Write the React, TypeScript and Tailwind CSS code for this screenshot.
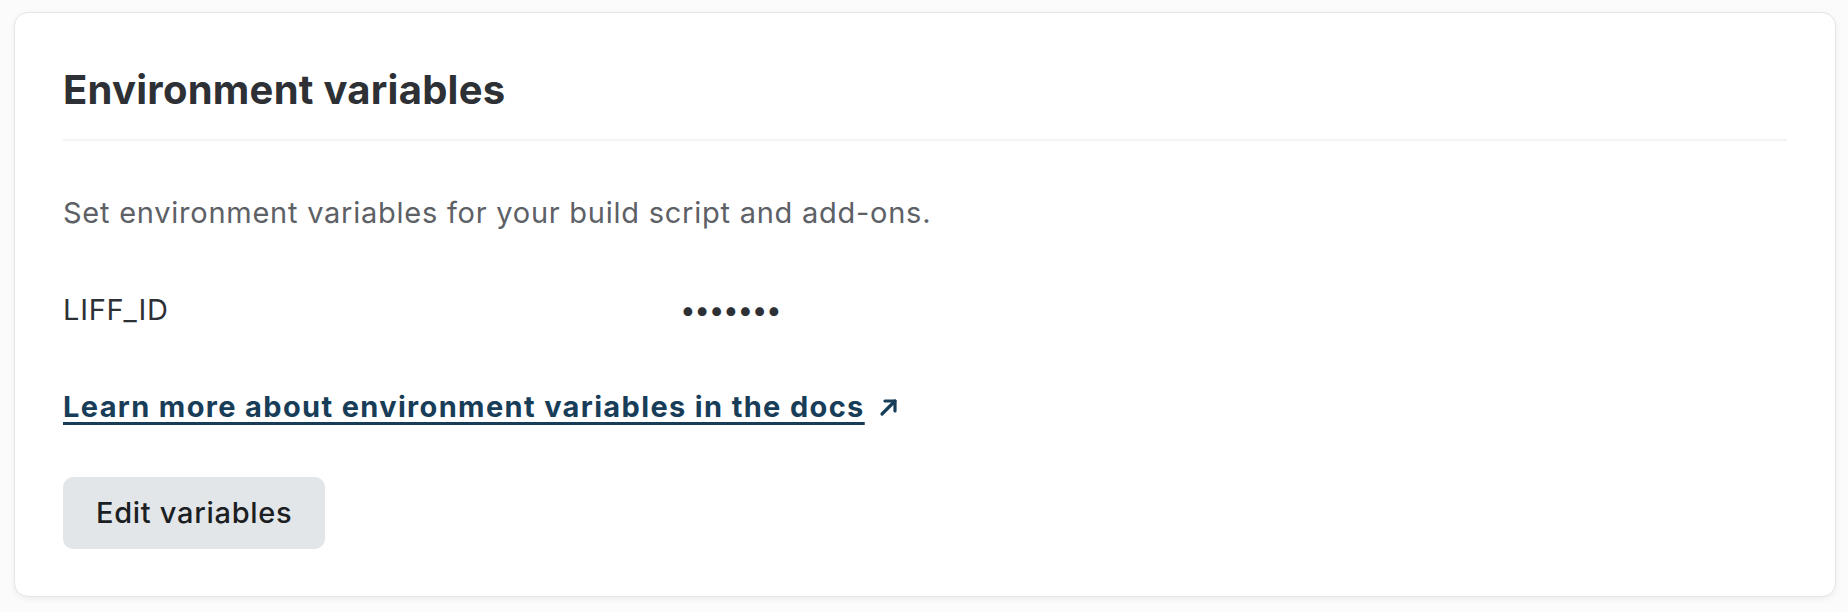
import React from "react";

export default function App() {
  return (
    <div
      className="min-h-[612px] w-full bg-[#fbfbfb] pl-[14px] pr-[12px] pt-[12px] pb-[15px]"
      style={{ fontFamily: "Inter, 'Noto Sans', 'Liberation Sans', sans-serif" }}
    >
      <div className="rounded-[14px] border border-[#e3e5e8] bg-white px-[48px] pt-[53px] pb-[47px] shadow-[0_2px_6px_rgba(0,0,0,0.06)]">
        <div className="border-b-2 border-[#f3f4f5] pb-[25px]">
          <h2 className="text-[40px] leading-[48px] font-bold tracking-[0.25px] text-[#2d3034]">
            Environment variables
          </h2>
        </div>
        <p className="mt-[52px] text-[29px] leading-[40px] tracking-[0.75px] text-[#5d6166]">
          Set environment variables for your build script and add-ons.
        </p>
        <div className="mt-[57px] flex text-[29px] leading-[40px] tracking-[0.75px] text-[#2d3034]">
          <div className="w-[617px] shrink-0">LIFF_ID</div>
          <div className="text-[28px] tracking-[-1.4px]">•••••••</div>
        </div>
        <div className="mt-[57px] flex items-center text-[29px] leading-[40px]">
          <a
            href="#"
            className="font-bold tracking-[1.35px] text-[#183d58] underline decoration-[3px] underline-offset-[5px]"
          >
            Learn more about environment variables in the docs
          </a>
          <svg
            className="ml-[14px]"
            width="20"
            height="20"
            viewBox="0 0 20 20"
            fill="none"
            stroke="#183d58"
            strokeWidth="3.2"
            strokeLinecap="round"
            strokeLinejoin="round"
          >
            <path d="M3 17 L16 4" />
            <path d="M6 4 H16 V14" />
          </svg>
        </div>
        <button className="mt-[50px] flex h-[72px] items-center rounded-[10px] bg-[#e3e6e9] px-[33px] text-[29px] font-medium tracking-[0.7px] text-[#1b1e22]">
          Edit variables
        </button>
      </div>
    </div>
  );
}
